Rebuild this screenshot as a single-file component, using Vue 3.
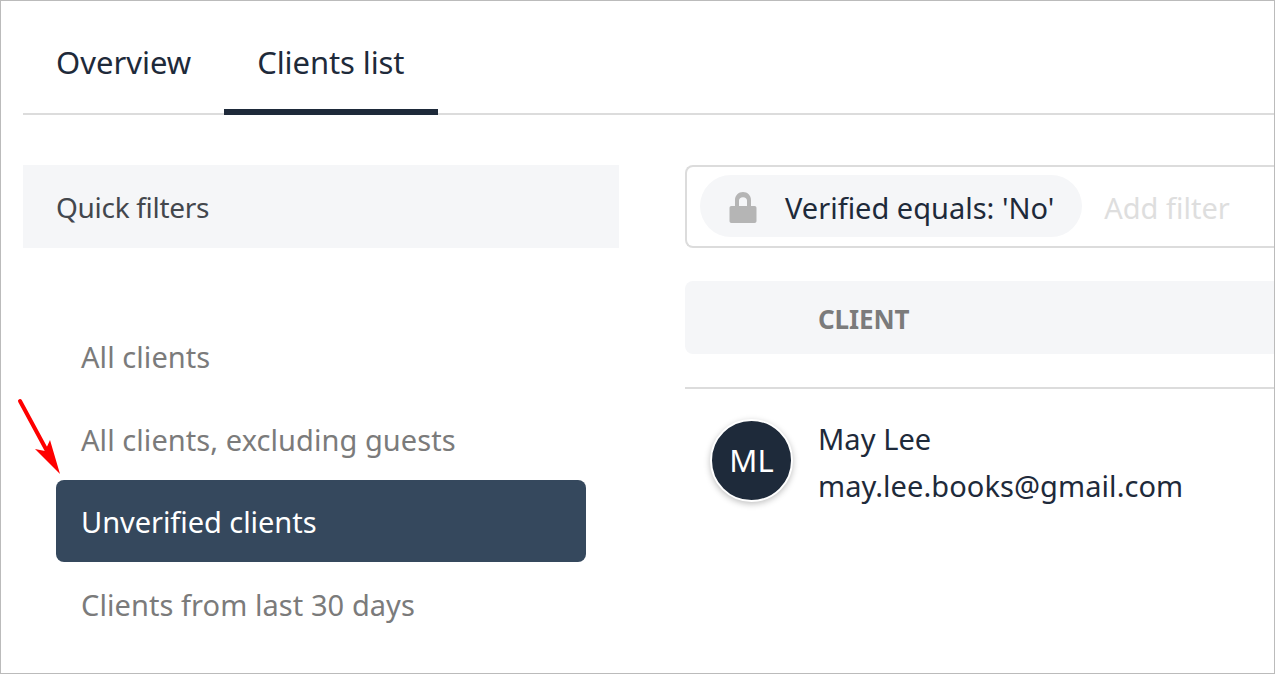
<template>
  <div class="frame">
    <nav class="tabs">
      <a class="tab">Overview</a>
      <a class="tab active">Clients list</a>
    </nav>

    <div class="columns">
      <aside class="sidebar">
        <div class="side-head">Quick filters</div>
        <ul class="filter-list">
          <li
            v-for="f in filters"
            :key="f"
            class="filter-item"
            :class="{ selected: f === selected }"
          >
            {{ f }}
          </li>
        </ul>
      </aside>

      <section class="main">
        <div class="filter-box">
          <div class="chip">
            <svg class="lock" width="28" height="33" viewBox="0 0 28 33">
              <path
                fill="#b5b5b5"
                fill-rule="evenodd"
                d="M6 15V9C6 4.300 9.500 1 14 1s8 3.300 8 8v6h3.500c1.300 0 2 .7 2 2v13c0 1.300-.7 2-2 2H2.500c-1.300 0-2-.7-2-2V17c0-1.300.7-2 2-2H6Zm4 0h8V9.500c0-1.800-1.500-3.300-4-3.300s-4 1.500-4 3.300V15Z"
              />
            </svg>
            <span>Verified equals: 'No'</span>
          </div>
          <span class="placeholder">Add filter</span>
        </div>

        <div class="table-head"><span>CLIENT</span></div>

        <div class="row">
          <div class="avatar">ML</div>
          <div class="client">
            <div>May Lee</div>
            <div>may.lee.books@gmail.com</div>
          </div>
        </div>
      </section>
    </div>

    <!-- annotation drawn over the screenshot -->
    <svg class="arrow" width="50" height="84" viewBox="0 0 50 84">
      <path d="M3 4 L30 54" stroke="#fe0000" stroke-width="4" stroke-linecap="round" fill="none" />
      <path d="M43 77 L18 52 L28 54 L33 43 Z" fill="#fe0000" />
    </svg>
  </div>
</template>

<script setup>
const filters = [
  'All clients',
  'All clients, excluding guests',
  'Unverified clients',
  'Clients from last 30 days'
]
const selected = 'Unverified clients'
</script>

<style>
html,
body {
  margin: 0;
  background: #fff;
}
</style>

<style scoped>
.frame {
  position: relative;
  box-sizing: border-box;
  width: 1275px;
  height: 674px;
  padding-left: 22px;
  border: 1px solid #bbbbbb;
  overflow: hidden;
  font-family: 'Noto Sans', 'Open Sans', sans-serif;
  color: #1e2a3a;
}

.tabs {
  display: flex;
  height: 114px;
  box-sizing: border-box;
  border-bottom: 2px solid #dcdcdc;
  margin-right: -22px;
}

.tab {
  padding: 0 33px;
  height: 114px;
  box-sizing: border-box;
  line-height: 122px;
  font-size: 31px;
  white-space: nowrap;
}

.tab.active {
  padding-right: 34px;
  letter-spacing: -0.1px;
  border-bottom: 6px solid #1e2a3a;
}

.columns {
  display: flex;
  padding-top: 50px;
}

.sidebar {
  width: 596px;
  flex: none;
}

.side-head {
  height: 83px;
  padding-left: 33px;
  background: #f5f6f8;
  font-size: 28px;
  line-height: 85px;
  letter-spacing: -0.3px;
  color: #43474d;
}

.filter-list {
  list-style: none;
  margin: 67px 33px 0;
  padding: 0;
}

.filter-item {
  height: 82.500px;
  padding-left: 25px;
  border-radius: 8px;
  font-size: 29px;
  line-height: 84px;
  letter-spacing: 0.07px;
  color: #7b7b7b;
}

.filter-item.selected {
  height: 82px;
  margin-bottom: 0.500px;
  letter-spacing: -0.05px;
  background: #35485d;
  color: #fff;
}

.main {
  flex: 1;
  min-width: 0;
  margin-left: 66px;
  margin-right: -22px;
}

.filter-box {
  display: flex;
  align-items: center;
  box-sizing: border-box;
  height: 83px;
  padding-left: 13px;
  border: 2px solid #dcdcdc;
  border-right: 0;
  border-radius: 8px 0 0 8px;
}

.chip {
  display: flex;
  align-items: center;
  box-sizing: border-box;
  height: 62px;
  margin-top: -1px;
  padding: 2px 28px 0 29px;
  border-radius: 31px;
  background: #f5f6f8;
  font-size: 29px;
  white-space: nowrap;
}

.lock {
  margin-top: 1px;
  margin-right: 28px;
}

.placeholder {
  margin-left: 22px;
  padding-top: 2px;
  font-size: 29px;
  color: #dedede;
}

.table-head {
  height: 73px;
  margin-top: 33px;
  padding-left: 133px;
  border-radius: 8px 0 0 8px;
  background: #f5f6f8;
  font-size: 26px;
  font-weight: 700;
  line-height: 77px;
  letter-spacing: -0.1px;
  color: #7b7b7b;
}

.row {
  display: flex;
  margin-top: 33px;
  padding: 30px 0 0 24px;
  border-top: 2px solid #dcdcdc;
}

.avatar {
  width: 79px;
  height: 79px;
  flex: none;
  margin-left: 1px;
  border: 2px solid #fff;
  border-radius: 50%;
  background: #1e2a3a;
  box-shadow: 0 2px 6px rgba(0, 0, 0, 0.25);
  color: #fff;
  font-size: 31px;
  line-height: 79px;
  text-align: center;
}

.client {
  margin-left: 25px;
  margin-top: -4px;
  font-size: 29px;
  line-height: 47px;
  letter-spacing: 0.07px;
}

.arrow {
  position: absolute;
  left: 16px;
  top: 396px;
}
</style>
